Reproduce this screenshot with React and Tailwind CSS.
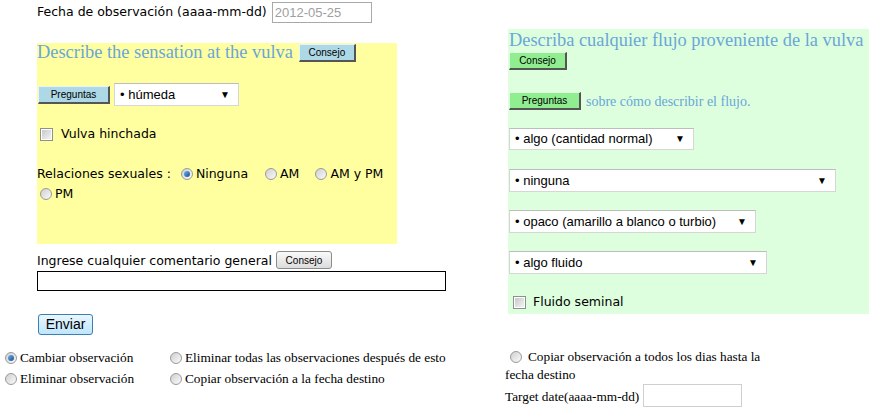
import React from "react";

const sans = { fontFamily: '"DejaVu Sans", Verdana, sans-serif' };
const arial = { fontFamily: '"Liberation Sans", Arial, sans-serif' };

function Radio({ checked }) {
  return (
    <span className="inline-flex h-[12px] w-[12px] shrink-0 items-center justify-center rounded-full border border-[#9a9a9a] bg-linear-to-br from-[#cfcfcf] to-[#fbfbfb]">
      {checked && <span className="h-[6px] w-[6px] rounded-full bg-linear-to-br from-[#6db3f2] to-[#1a4f8c]" />}
    </span>
  );
}

function Checkbox() {
  return (
    <span className="inline-flex h-[13px] w-[13px] shrink-0 items-center justify-center border border-[#8e8f8f] bg-white">
      <span className="h-[9px] w-[9px] bg-linear-to-br from-[#c8c8c8] to-[#f4f4f4]" />
    </span>
  );
}

function Select({ label, width, height = "h-[22px]" }) {
  return (
    <div
      className={`${width} ${height} flex items-center justify-between whitespace-nowrap border border-[#d6d6d6] border-t-[#bdbdbd] bg-white pl-[5px] pr-[8px] text-[13px] text-black`}
      style={arial}
    >
      <span>• {label}</span>
      <span className="text-[10px] leading-none">▼</span>
    </div>
  );
}

function BlueButton({ children, width }) {
  return (
    <span
      className={`${width} inline-flex h-[18px] items-center justify-center border border-t-[#e8f4f8] border-l-[#e8f4f8] border-r-2 border-b-2 border-r-[#555] border-b-[#555] bg-[#add8e6] text-[10px] text-black`}
      style={arial}
    >
      {children}
    </span>
  );
}

function GreenButton({ children, width }) {
  return (
    <span
      className={`${width} inline-flex h-[18px] items-center justify-center border border-t-[#e0ffe0] border-l-[#e0ffe0] border-r-2 border-b-2 border-r-[#555] border-b-[#555] bg-[#90ee90] text-[10px] text-black`}
      style={arial}
    >
      {children}
    </span>
  );
}

export default function App() {
  const serif = { fontFamily: '"Liberation Serif", "Times New Roman", serif' };

  return (
    <div className="h-[420px] w-[885px] overflow-hidden bg-white text-black" style={sans}>
      {/* top part: two columns */}
      <div className="flex h-[347px]">
        {/* left column */}
        <div className="ml-[37px] w-[409px]">
          <div className="mt-[2px] flex h-[21px] items-center text-[12.5px]">
            <span>Fecha de observación (aaaa-mm-dd)</span>
            <div className="ml-[5px] flex h-[21px] w-[100px] items-center border border-[#a9a9a9] px-[2px] text-[13px] text-[#a0a0a0]" style={arial}>
              2012-05-25
            </div>
          </div>

          {/* yellow box */}
          <div className="mt-[20px] h-[201px] w-[360px] bg-[#ffffa0]">
            <div className="flex h-[19px] items-center">
              <span className="whitespace-nowrap text-[18.4px] leading-[19px] text-[#6aa6d9]" style={serif}>
                Describe the sensation at the vulva
              </span>
              <span className="ml-[6px] flex">
                <BlueButton width="w-[57px]">Consejo</BlueButton>
              </span>
            </div>

            <div className="mt-[21px] flex h-[23px] items-center">
              <span className="ml-[1px] flex">
                <BlueButton width="w-[72px]">Preguntas</BlueButton>
              </span>
              <div className="ml-[4px]">
                <Select label="húmeda" width="w-[125px]" height="h-[23px]" />
              </div>
            </div>

            <div className="mt-[22px] flex h-[13px] items-center pl-[3px] text-[12.5px]">
              <Checkbox />
              <span className="ml-[8px]">Vulva hinchada</span>
            </div>

            <div className="mt-[23px] text-[12.5px] leading-[20px]">
              <div className="flex items-center whitespace-nowrap">
                <span>Relaciones sexuales :</span>
                <span className="ml-[10px] flex items-center">
                  <Radio checked />
                  <span className="ml-[3px]">Ninguna</span>
                </span>
                <span className="ml-[17px] flex items-center">
                  <Radio />
                  <span className="ml-[3px]">AM</span>
                </span>
                <span className="ml-[16px] flex items-center">
                  <Radio />
                  <span className="ml-[3px]">AM y PM</span>
                </span>
              </div>
              <div className="flex items-center pl-[3px]">
                <Radio />
                <span className="ml-[3px]">PM</span>
              </div>
            </div>
          </div>

          <div className="mt-[7px] flex h-[18px] items-center text-[12.5px]">
            <span className="pt-[3px]">Ingrese cualquier comentario general</span>
            <span
              className="ml-[4px] inline-flex h-[18px] w-[56px] items-center justify-center rounded-[3px] border border-[#8a8a8a] bg-linear-to-b from-[#fafafa] to-[#dcdcdc] text-[10px]"
              style={arial}
            >
              Consejo
            </span>
          </div>
          <div className="mt-[2px] h-[20px] w-[409px] border border-black bg-white" />

          <div className="mt-[23px] ml-[1px] flex">
            <span
              className="inline-flex h-[21px] w-[55px] items-center justify-center rounded-[3px] border border-[#3c7fb1] bg-linear-to-b from-[#eaf6fd] to-[#bee6fd] text-[14px]"
              style={arial}
            >
              Enviar
            </span>
          </div>
        </div>

        {/* right column */}
        <div className="ml-[62px] mt-[29px] h-[285px] w-[361px] bg-[#ddffdd]">
          <div className="mt-[1px] whitespace-nowrap pl-[1px] text-[18.4px] leading-[20px] text-[#6aa6d9]" style={serif}>
            Describa cualquier flujo proveniente de la vulva
          </div>
          <div className="mt-[2px] flex pl-[1px]">
            <GreenButton width="w-[58px]">Consejo</GreenButton>
          </div>
          <div className="mt-[22px] flex h-[18px] items-center pl-[1px]">
            <GreenButton width="w-[72px]">Preguntas</GreenButton>
            <span className="ml-[5px] text-[14px] text-[#6aa6d9]" style={serif}>
              sobre cómo describir el flujo.
            </span>
          </div>
          <div className="mt-[18px] pl-[1px]">
            <Select label="algo (cantidad normal)" width="w-[185px]" />
          </div>
          <div className="mt-[19px] pl-[1px]">
            <Select label="ninguna" width="w-[327px]" height="h-[23px]" />
          </div>
          <div className="mt-[18px] pl-[1px]">
            <Select label="opaco (amarillo a blanco o turbio)" width="w-[247px]" height="h-[23px]" />
          </div>
          <div className="mt-[18px] pl-[1px]">
            <Select label="algo fluido" width="w-[258px]" height="h-[23px]" />
          </div>
          <div className="mt-[22px] flex h-[13px] items-center pl-[5px] text-[12.5px]">
            <Checkbox />
            <span className="ml-[7px]">Fluido seminal</span>
          </div>
        </div>
      </div>

      {/* bottom radios */}
      <div className="flex text-[13.3px]" style={serif}>
        <div className="ml-[5px] w-[165px]">
          <div className="flex h-[21px] items-center">
            <Radio checked />
            <span className="ml-[3px]">Cambiar observación</span>
          </div>
          <div className="flex h-[21px] items-center">
            <Radio />
            <span className="ml-[3px]">Eliminar observación</span>
          </div>
        </div>
        <div className="w-[335px]">
          <div className="flex h-[21px] items-center">
            <Radio />
            <span className="ml-[3px]">Eliminar todas las observaciones después de esto</span>
          </div>
          <div className="flex h-[21px] items-center">
            <Radio />
            <span className="ml-[3px]">Copiar observación a la fecha destino</span>
          </div>
        </div>
        <div className="w-[300px]">
          <div className="flex h-[19px] items-center pl-[5px]">
            <Radio />
            <span className="ml-[6px]">Copiar observación a todos los dias hasta la</span>
          </div>
          <div className="flex h-[18px] items-center">fecha destino</div>
          <div className="flex h-[22px] items-center">
            <span className="pt-[3px]">Target date(aaaa-mm-dd)</span>
            <div className="ml-[4px] h-[23px] w-[99px] border border-[#cfcfcf] bg-white" />
          </div>
        </div>
      </div>
    </div>
  );
}
